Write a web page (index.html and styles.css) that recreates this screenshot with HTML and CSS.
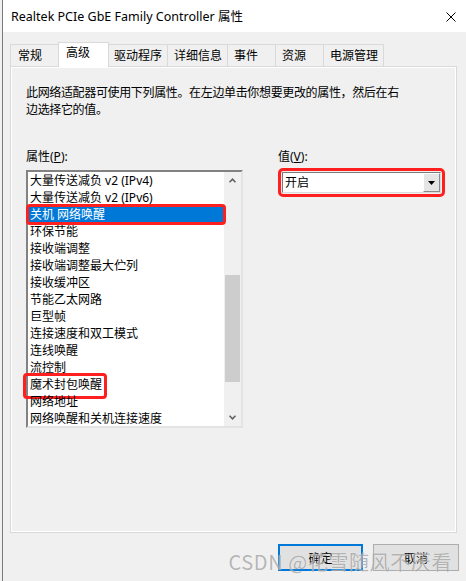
FILE: index.html
```html
<!DOCTYPE html>
<html lang="zh-CN">
<head>
<meta charset="utf-8">
<title>Realtek PCIe GbE Family Controller 属性</title>
<link rel="stylesheet" href="styles.css">
</head>
<body>
<div class="window">
  <div class="titlebar">
    <span class="title">Realtek PCIe GbE Family Controller 属性</span>
    <svg class="close" width="10" height="10" viewBox="0 0 10 10"><path d="M0.5 0.5L9.5 9.5M9.5 0.5L0.5 9.5" stroke="#000" stroke-width="1" fill="none"/></svg>
  </div>
  <div class="main">
    <div class="tabs">
      <div class="tab first">常规</div>
      <div class="tab active">高级</div>
      <div class="tab">驱动程序</div>
      <div class="tab">详细信息</div>
      <div class="tab">事件</div>
      <div class="tab">资源</div>
      <div class="tab last">电源管理</div>
    </div>
    <div class="panel">
      <p class="desc">此网络适配器可使用下列属性。在左边单击你想要更改的属性，然后在右<br>边选择它的值。</p>
      <div class="cols">
        <div class="col-left">
          <div class="label">属性(<u>P</u>):</div>
          <div class="listbox">
            <ul class="items">
              <li>大量传送减负 v2 (IPv4)</li>
              <li>大量传送减负 v2 (IPv6)</li>
              <li class="selected">关机 网络唤醒</li>
              <li>环保节能</li>
              <li>接收端调整</li>
              <li>接收端调整最大伫列</li>
              <li>接收缓冲区</li>
              <li>节能乙太网路</li>
              <li>巨型帧</li>
              <li>连接速度和双工模式</li>
              <li>连线唤醒</li>
              <li>流控制</li>
              <li><span class="mark">魔术封包唤醒</span></li>
              <li>网络地址</li>
              <li>网络唤醒和关机连接速度</li>
            </ul>
            <div class="vscroll">
              <div class="arrow"><svg width="7" height="5" viewBox="0 0 7 5"><path d="M0.5 4.3L3.5 1.2L6.5 4.3" stroke="#606060" stroke-width="1.6" fill="none"/></svg></div>
              <div class="track"><div class="thumb"></div></div>
              <div class="arrow"><svg width="7" height="5" viewBox="0 0 7 5"><path d="M0.5 0.7L3.5 3.8L6.5 0.7" stroke="#606060" stroke-width="1.6" fill="none"/></svg></div>
            </div>
          </div>
        </div>
        <div class="col-right">
          <div class="label">值(<u>V</u>):</div>
          <div class="combo">
            <span class="combo-text">开启</span>
            <div class="dropbtn"><svg width="7" height="4" viewBox="0 0 7 4"><path d="M0 0H7L3.5 4Z" fill="#000"/></svg></div>
          </div>
        </div>
      </div>
    </div>
    <div class="buttons">
      <button class="btn default">确定</button>
      <button class="btn">取消</button>
      <div class="watermark">CSDN @花雪随风不厌看</div>
    </div>
  </div>
</div>
</body>
</html>
```

FILE: styles.css
```css
* { box-sizing: border-box; }
html, body { margin: 0; padding: 0; }
body {
  width: 466px;
  height: 581px;
  overflow: hidden;
  background: #f0f0f0;
  font-family: "Noto Sans", "Noto Sans CJK SC", sans-serif;
  font-size: 12px;
  color: #000;
}
.window {
  margin-left: 2px;
  border-left: 1px solid #7a7a7a;
  height: 581px;
  background: #f0f0f0;
}
.titlebar {
  height: 32px;
  background: #fff;
  display: flex;
  align-items: center;
  justify-content: space-between;
  padding: 1px 10px 0 8px;
}
.title { font-size: 12.5px; line-height: 16px; white-space: nowrap; }
.close { display: block; margin-top: 1px; }

.main { padding: 10px 0 0 7px; }

.tabs {
  display: flex;
  align-items: flex-end;
  height: 24px;
  position: relative;
  z-index: 1;
}
.tab {
  position: relative;
  height: 22px;
  min-width: 48px;
  padding: 0 5px 0 6px;
  border-top: 1px solid #d9d9d9;
  border-left: 1px solid #d9d9d9;
  background: #f0f0f0;
  line-height: 21px;
  white-space: nowrap;
}
.tab.first { padding-left: 7px; }
.tab.last { border-right: 1px solid #d9d9d9; }
.tab.active {
  z-index: 2;
  width: 51px;
  height: 25px;
  margin-bottom: -1px;
  margin-right: -2px;
  padding-left: 7px;
  border-right: 1px solid #d9d9d9;
  background: #fff;
  line-height: 20px;
}

.panel {
  width: 447px;
  height: 467px;
  border: 1px solid #d9d9d9;
  box-shadow: inset 1px 1px 0 #fff, inset -1px -1px 0 #fff;
  padding: 17px 15px 0;
}
.desc { margin: 0; line-height: 17px; white-space: nowrap; letter-spacing: -0.35px; }
.cols { display: flex; margin-top: 30px; }
.col-left { width: 217px; }
.col-right { margin-left: 35px; }
.label { line-height: 17px; white-space: nowrap; }

.listbox {
  margin-top: 5px;
  height: 258px;
  display: flex;
  background: #fff;
  border: 2px solid;
  border-color: #828282 #e3e3e3 #e3e3e3 #828282;
}
.items {
  position: relative;
  z-index: 1;
  flex: 1;
  list-style: none;
  margin: 0;
  padding: 0;
}
.items li {
  height: 17px;
  line-height: 17px;
  padding-left: 2px;
  white-space: nowrap;
}
.items li.selected {
  background: #0078d7;
  color: #fff;
  outline: 3px solid #ff1f1f;
  outline-offset: -1px;
  border-radius: 2px;
}
.mark {
  display: inline-block;
  vertical-align: top;
  margin-left: -4px;
  padding: 0 2px 3px 4px;
  outline: 3px solid #ff1f1f;
  border-radius: 1px;
}
.vscroll {
  width: 17px;
  display: flex;
  flex-direction: column;
  background: #f0f0f0;
}
.arrow {
  height: 17px;
  display: flex;
  align-items: center;
  justify-content: center;
}
.arrow svg { display: block; }
.track { flex: 1; }
.thumb {
  margin: 86px 1px 0;
  height: 107px;
  background: #cdcdcd;
}

.combo {
  margin: 7px 0 0 4px;
  width: 159px;
  height: 21px;
  display: flex;
  background: #fff;
  border: 1px solid;
  border-color: #7a7a7a #dcdcdc #dcdcdc #7a7a7a;
  outline: 3px solid #ff1f1f;
  outline-offset: 1px;
  border-radius: 1px;
}
.combo-text { padding-left: 2px; line-height: 19px; }
.dropbtn {
  margin-left: auto;
  width: 17px;
  height: 19px;
  background: #e5e5e5;
  border: 1px solid;
  border-color: #fff #8a8a8a #8a8a8a #fff;
  display: flex;
  align-items: center;
  justify-content: center;
}
.dropbtn svg { display: block; margin-top: 1px; }

.buttons {
  position: relative;
  display: flex;
  justify-content: flex-end;
  gap: 10px;
  margin-top: 11px;
  padding-right: 7px;
}
.btn {
  width: 86px;
  height: 27px;
  padding: 0;
  background: #e1e1e1;
  border: 1px solid #adadad;
  font-family: "Noto Sans", "Noto Sans CJK SC", sans-serif;
  font-size: 12px;
  color: #000;
}
.btn.default { width: 85px; border: 2px solid #0078d7; }
.watermark {
  position: absolute;
  right: 14px;
  top: 7px;
  font-family: "Noto Sans CJK SC", sans-serif;
  font-size: 20px;
  line-height: 22px;
  letter-spacing: 0.6px;
  color: rgba(120, 120, 120, 0.55);
  text-shadow: 0 0 1px rgba(255, 255, 255, 0.8);
  white-space: nowrap;
  pointer-events: none;
}
```
